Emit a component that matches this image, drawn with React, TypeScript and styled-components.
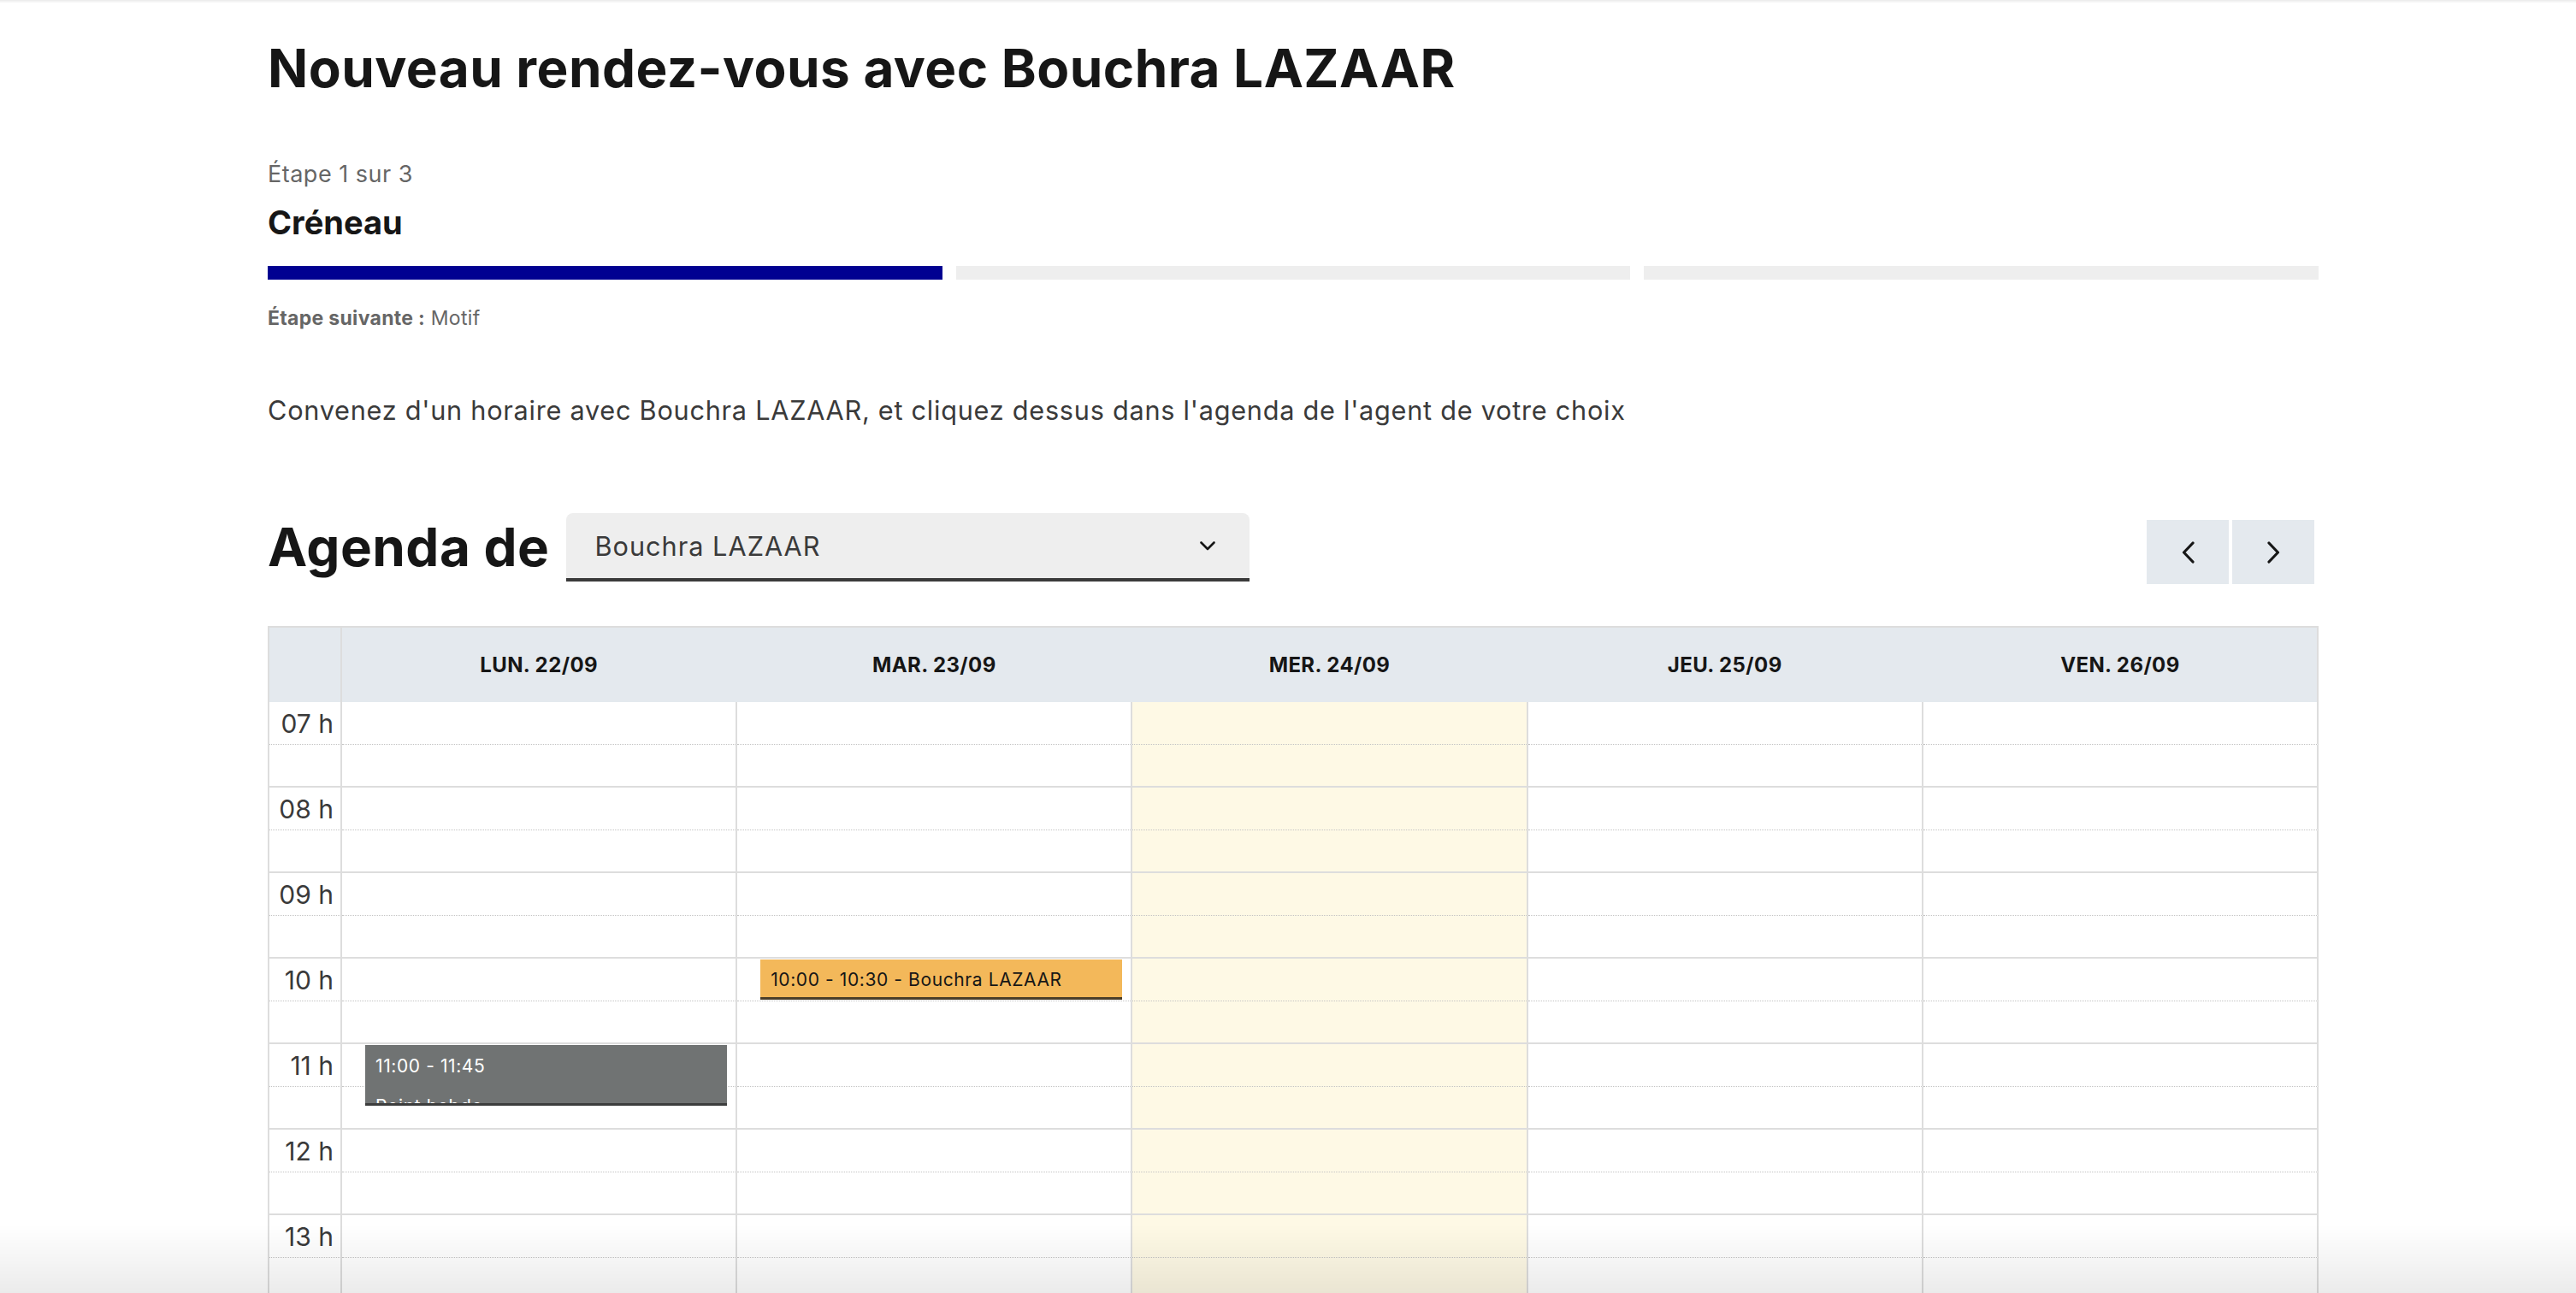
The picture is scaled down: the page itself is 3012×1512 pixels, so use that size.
import React from "react";
import styled, { createGlobalStyle } from "styled-components";

const GlobalStyle = createGlobalStyle`
  html, body {
    margin: 0;
    padding: 0;
    overflow: hidden;
    background: #ffffff;
  }
  body {
    font-family: Inter, "Noto Sans", sans-serif;
    color: #161616;
  }
  * {
    box-sizing: border-box;
  }
`;

const TopShade = styled.div`
  position: fixed;
  top: 0;
  left: 0;
  right: 0;
  height: 4px;
  background: linear-gradient(rgba(0, 0, 0, 0.08), rgba(0, 0, 0, 0));
  pointer-events: none;
`;

const BottomShade = styled.div`
  position: fixed;
  left: 0;
  right: 0;
  bottom: 0;
  height: 80px;
  background: linear-gradient(rgba(0, 0, 0, 0), rgba(0, 0, 0, 0.08));
  pointer-events: none;
  z-index: 5;
`;

const Page = styled.main`
  width: 2398px;
  margin-left: 313px;
  padding-top: 41px;
`;

const Title = styled.h1`
  margin: 0;
  font-size: 62px;
  line-height: 77px;
  font-weight: 700;
  letter-spacing: 0.45px;
  color: #161616;
`;

const StepCount = styled.p`
  margin: 63px 0 0;
  font-size: 27px;
  line-height: 46px;
  color: #666666;
  letter-spacing: 0.5px;
`;

const StepTitle = styled.h2`
  margin: 6px 0 0;
  font-size: 38px;
  line-height: 54px;
  font-weight: 700;
  color: #161616;
`;

const Bars = styled.div`
  margin-top: 24px;
  display: grid;
  grid-template-columns: repeat(3, 1fr);
  gap: 16px;
`;

const Bar = styled.div<{ $active?: boolean }>`
  height: 16px;
  background: ${(p) => (p.$active ? "#000091" : "#eeeeee")};
`;

const NextStep = styled.p`
  margin: 26px 0 0;
  font-size: 23px;
  line-height: 38px;
  color: #666666;
  letter-spacing: 0.3px;

  b {
    font-weight: 700;
  }
`;

const Intro = styled.p`
  margin: 66px 0 0;
  font-size: 30.7px;
  line-height: 46px;
  color: #3a3a3a;
  letter-spacing: 0.73px;
`;

const Toolbar = styled.div`
  margin-top: 97px;
  display: flex;
  align-items: flex-start;
`;

const AgendaTitle = styled.h2`
  margin: 1px 20px 0 0;
  font-size: 62px;
  line-height: 77px;
  font-weight: 700;
  letter-spacing: 0.45px;
  color: #161616;
`;

const Select = styled.div`
  width: 799px;
  height: 80px;
  padding: 0 40px 0 33px;
  display: flex;
  align-items: center;
  justify-content: space-between;
  background: #eeeeee;
  border-radius: 8px 8px 0 0;
  border-bottom: 4px solid #3a3a3a;
  font-size: 30.7px;
  color: #3a3a3a;
  letter-spacing: 1px;
`;

const NavGroup = styled.div`
  margin: 8px 5px 0 auto;
  display: flex;
  gap: 4px;
`;

const NavButton = styled.button`
  width: 96px;
  height: 75px;
  padding: 0;
  border: none;
  background: #e4e9ee;
  display: flex;
  align-items: center;
  justify-content: center;
  cursor: pointer;
`;

const Calendar = styled.section`
  margin-top: 49px;
  border-top: 2px solid #dddddd;
  border-left: 2px solid #dddddd;
`;

const GridRow = styled.div`
  display: grid;
  grid-template-columns: 85px repeat(5, 1fr);
`;

const HeadCell = styled.div<{ $edge?: boolean }>`
  height: 87px;
  display: flex;
  align-items: center;
  justify-content: center;
  background: #e4e9ee;
  border-right: 2px solid ${(p) => (p.$edge ? "#dddddd" : "#e4e9ee")};
  font-size: 24px;
  font-weight: 700;
  color: #161616;
  letter-spacing: 0.4px;
`;

const TimeCell = styled.div<{ $major: boolean }>`
  height: 50px;
  padding-right: 8px;
  display: flex;
  align-items: center;
  justify-content: flex-end;
  border-right: 2px solid #dddddd;
  border-bottom: ${(p) => (p.$major ? "2px solid #dddddd" : "1px dotted #c4c4c4")};
  font-size: 30px;
  color: #3a3a3a;
`;

const DayCell = styled.div<{ $major: boolean; $today?: boolean }>`
  position: relative;
  height: 50px;
  background: ${(p) => (p.$today ? "#fef9e5" : "#ffffff")};
  border-right: 2px solid #dddddd;
  border-bottom: ${(p) => (p.$major ? "2px solid #dddddd" : "1px dotted #c4c4c4")};
`;

const Event = styled.div<{ $tone: "busy" | "new"; $height: number }>`
  position: absolute;
  z-index: 2;
  top: 1px;
  left: 27px;
  right: 10px;
  height: ${(p) => p.$height}px;
  overflow: hidden;
  padding: ${(p) => (p.$tone === "new" ? "11px" : "12px")} 12px 0;
  background: ${(p) => (p.$tone === "new" ? "#f3b85a" : "#707373")};
  color: ${(p) => (p.$tone === "new" ? "#161616" : "#ffffff")};
  border-bottom: 3px solid ${(p) => (p.$tone === "new" ? "#4a3d28" : "#3c3d3d")};
  font-size: 21px;
  line-height: 26px;
  letter-spacing: 0.6px;
  white-space: nowrap;
`;

const EventTitle = styled.div`
  margin-top: 21px;
`;

const Chevron = ({ dir }: { dir: "left" | "right" | "down" }) => {
  if (dir === "down") {
    return (
      <svg width="18" height="11" viewBox="0 0 18 11" fill="none">
        <path d="M1.5 1.5 L9 9 L16.5 1.5" stroke="#161616" strokeWidth="2.6" strokeLinecap="round" strokeLinejoin="round" />
      </svg>
    );
  }
  const d = dir === "left" ? "M13 2 L2.5 13 L13 24" : "M2 2 L12.5 13 L2 24";
  return (
    <svg width="15" height="26" viewBox="0 0 15 26" fill="none">
      <path d={d} stroke="#161616" strokeWidth="3.2" strokeLinecap="round" strokeLinejoin="round" />
    </svg>
  );
};

const days = ["LUN. 22/09", "MAR. 23/09", "MER. 24/09", "JEU. 25/09", "VEN. 26/09"];
const hours = [7, 8, 9, 10, 11, 12, 13, 14, 15, 16, 17, 18, 19];

type CalEvent = { day: number; slot: number; tone: "busy" | "new"; height: number; time: string; title?: string };

const events: CalEvent[] = [
  { day: 1, slot: 6, tone: "new", height: 47, time: "10:00 - 10:30 - Bouchra LAZAAR" },
  { day: 0, slot: 8, tone: "busy", height: 71, time: "11:00 - 11:45", title: "Point hebdo" },
];

const AgendaGrid = () => {
  const slots = hours.flatMap((h) => [
    { hour: h, major: false },
    { hour: h, major: true },
  ]);
  return (
    <Calendar>
      <GridRow>
        <HeadCell $edge />
        {days.map((d, i) => (
          <HeadCell key={d} $edge={i === days.length - 1}>
            {d}
          </HeadCell>
        ))}
      </GridRow>
      <GridRow>
        {slots.map((s, idx) => (
          <React.Fragment key={idx}>
            <TimeCell $major={s.major}>{!s.major && `${String(s.hour).padStart(2, "0")} h`}</TimeCell>
            {days.map((d, di) => {
              const ev = events.find((e) => e.day === di && e.slot === idx);
              return (
                <DayCell key={d} $major={s.major} $today={di === 2}>
                  {ev && (
                    <Event $tone={ev.tone} $height={ev.height}>
                      <div>{ev.time}</div>
                      {ev.title && <EventTitle>{ev.title}</EventTitle>}
                    </Event>
                  )}
                </DayCell>
              );
            })}
          </React.Fragment>
        ))}
      </GridRow>
    </Calendar>
  );
};

const App = () => {
  return (
    <>
      <GlobalStyle />
      <TopShade />
      <Page>
        <Title>Nouveau rendez-vous avec Bouchra LAZAAR</Title>
        <StepCount>Étape 1 sur 3</StepCount>
        <StepTitle>Créneau</StepTitle>
        <Bars>
          <Bar $active />
          <Bar />
          <Bar />
        </Bars>
        <NextStep>
          <b>Étape suivante :</b> Motif
        </NextStep>
        <Intro>
          Convenez d'un horaire avec Bouchra LAZAAR, et cliquez dessus dans l'agenda de l'agent de votre choix
        </Intro>
        <Toolbar>
          <AgendaTitle>Agenda de</AgendaTitle>
          <Select>
            <span>Bouchra LAZAAR</span>
            <Chevron dir="down" />
          </Select>
          <NavGroup>
            <NavButton aria-label="Précédent">
              <Chevron dir="left" />
            </NavButton>
            <NavButton aria-label="Suivant">
              <Chevron dir="right" />
            </NavButton>
          </NavGroup>
        </Toolbar>
        <AgendaGrid />
      </Page>
      <BottomShade />
    </>
  );
};

export default App;
